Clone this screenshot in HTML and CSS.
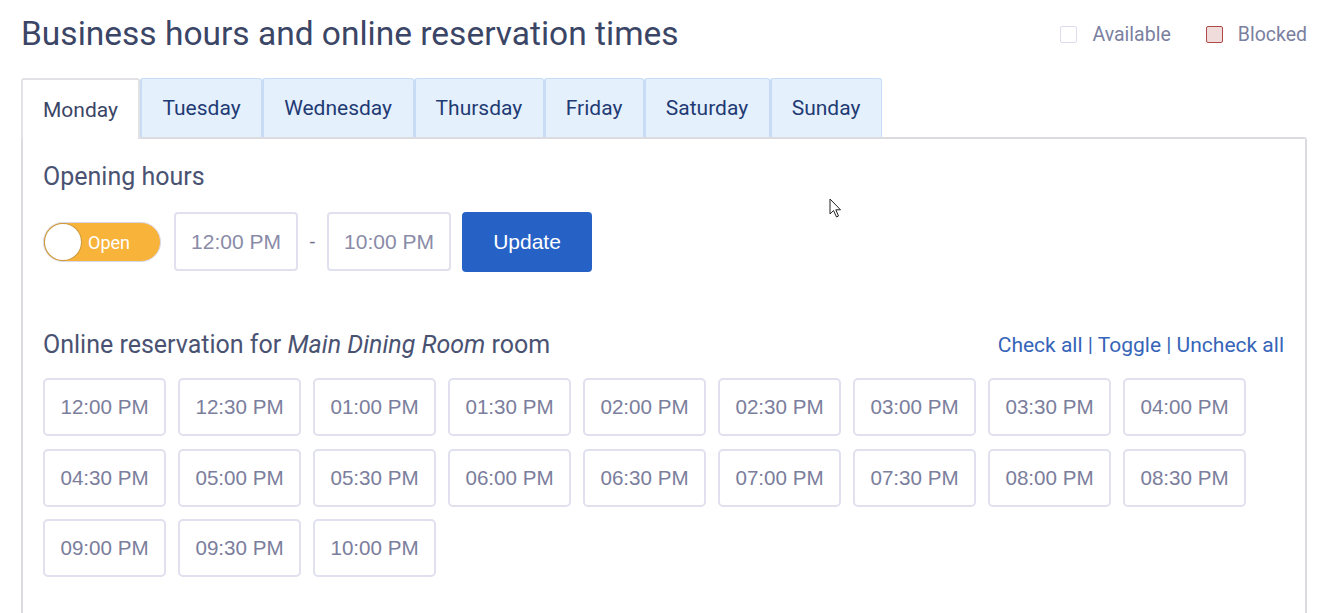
FILE: index.html
```html
<!DOCTYPE html>
<html>
<head>
<meta charset="utf-8">
<link rel="stylesheet" href="styles.css">
</head>
<body>
<div class="page">
  <header class="top">
    <h1 class="title">Business hours and online reservation times</h1>
    <div class="legend">
      <span class="legend-item"><span class="box box-available"></span>Available</span>
      <span class="legend-item"><span class="box box-blocked"></span>Blocked</span>
    </div>
  </header>
  <nav class="tabs">
    <div class="tab active">Monday</div>
    <div class="tab">Tuesday</div>
    <div class="tab">Wednesday</div>
    <div class="tab">Thursday</div>
    <div class="tab">Friday</div>
    <div class="tab">Saturday</div>
    <div class="tab">Sunday</div>
  </nav>
  <section class="panel">
    <h2 class="section-title">Opening hours</h2>
    <div class="hours-row">
      <div class="toggle"><span class="knob"></span><span class="toggle-label">Open</span></div>
      <div class="time-input">12:00 PM</div>
      <span class="dash">-</span>
      <div class="time-input">10:00 PM</div>
      <button class="btn-update">Update</button>
    </div>
    <div class="res-head">
      <h2 class="section-title">Online reservation for <em>Main Dining Room</em> room</h2>
      <div class="links"><a>Check all</a> | <a>Toggle</a> | <a>Uncheck all</a></div>
    </div>
    <div class="slots">
      <div class="slot">12:00 PM</div>
      <div class="slot">12:30 PM</div>
      <div class="slot">01:00 PM</div>
      <div class="slot">01:30 PM</div>
      <div class="slot">02:00 PM</div>
      <div class="slot">02:30 PM</div>
      <div class="slot">03:00 PM</div>
      <div class="slot">03:30 PM</div>
      <div class="slot">04:00 PM</div>
      <div class="slot">04:30 PM</div>
      <div class="slot">05:00 PM</div>
      <div class="slot">05:30 PM</div>
      <div class="slot">06:00 PM</div>
      <div class="slot">06:30 PM</div>
      <div class="slot">07:00 PM</div>
      <div class="slot">07:30 PM</div>
      <div class="slot">08:00 PM</div>
      <div class="slot">08:30 PM</div>
      <div class="slot">09:00 PM</div>
      <div class="slot">09:30 PM</div>
      <div class="slot">10:00 PM</div>
    </div>
  </section>
  <svg class="cursor" width="14" height="22" viewBox="0 0 14 22">
    <path d="M1 1 L1 16 L4.5 12.5 L7.5 19 L9.5 18 L6.8 11.8 L11.5 11.8 Z" fill="#fff" stroke="#222" stroke-width="1"/>
  </svg>
</div>
</body>
</html>
```

FILE: styles.css
```css
html, body {
  margin: 0;
  padding: 0;
  background: #fff;
}
body {
  font-family: Roboto, "Liberation Sans", Arial, sans-serif;
  width: 1330px;
  height: 613px;
  overflow: hidden;
}
.page {
  position: relative;
  height: 613px;
  padding: 0 23px 0 21px;
  display: flex;
  flex-direction: column;
}
.top {
  display: flex;
  justify-content: space-between;
  align-items: center;
  height: 78px;
  flex: none;
}
.title {
  margin: -12px 0 0 0;
  font-size: 33.5px;
  font-weight: 400;
  color: #3b4566;
}
.legend {
  display: flex;
  gap: 35px;
  margin-top: -10px;
  color: #7b7fa0;
  font-size: 19.5px;
}
.legend-item {
  display: flex;
  align-items: center;
}
.box {
  width: 15px;
  height: 15px;
  border-radius: 2px;
  margin-right: 15px;
}
.box-available {
  border: 1px solid #dcdcef;
  background: #fff;
}
.box-blocked {
  border: 1px solid #b04848;
  background: #f1dcdc;
}
.tabs {
  display: flex;
  height: 59px;
  flex: none;
}
.tab {
  display: flex;
  align-items: center;
  padding: 0 20.5px 0 20px;
  font-size: 21px;
  color: #1f3b73;
  background: #e5f0fd;
  border: 1px solid #c8ddf5;
  border-left-width: 2px;
  border-bottom: none;
  border-radius: 3px 3px 0 0;
  box-sizing: border-box;
}
.tab.active {
  background: #fff;
  color: #3b4566;
  border: 2px solid #e2e2e6;
  border-bottom: none;
  margin-bottom: -2px;
  position: relative;
  z-index: 1;
  height: 61px;
}
.panel {
  flex: 1;
  border: 2px solid #dcdce0;
  border-bottom: none;
  border-radius: 0 3px 0 0;
  padding: 24px 21px 0 20px;
}
.section-title {
  margin: 0;
  font-size: 25px;
  font-weight: 400;
  color: #4a5272;
  line-height: 28px;
}
.section-title em {
  font-style: italic;
}
.hours-row {
  display: flex;
  align-items: center;
  margin-top: 21px;
  height: 59px;
}
.toggle {
  position: relative;
  width: 116px;
  height: 38px;
  border-radius: 20px;
  background: #f8b33b;
  border: 1px solid #d8d8ea;
  display: flex;
  align-items: center;
}
.knob {
  position: absolute;
  left: 1px;
  top: 1px;
  width: 36px;
  height: 36px;
  border-radius: 50%;
  background: #fff;
  box-shadow: 0 0 0 1px #c99a3c;
}
.toggle-label {
  margin-left: 44px;
  margin-top: 2px;
  color: #fff;
  font-size: 18px;
}
.time-input {
  width: 124px;
  height: 59px;
  box-sizing: border-box;
  border: 2px solid #e0e0ee;
  border-radius: 4px;
  display: flex;
  align-items: center;
  justify-content: center;
  font-family: "Liberation Sans", Arial, sans-serif;
  font-size: 21px;
  color: #8a8ba8;
}
.toggle + .time-input {
  margin-left: 13px;
}
.dash {
  width: 29px;
  text-align: center;
  font-family: "Liberation Sans", Arial, sans-serif;
  color: #6d6f88;
  font-size: 19px;
}
.btn-update {
  margin-left: 11px;
  width: 130px;
  height: 60px;
  background: #2662c6;
  color: #fff;
  border: none;
  border-radius: 4px;
  font-family: "Liberation Sans", Arial, sans-serif;
  font-size: 21px;
  padding: 0;
}
.res-head {
  display: flex;
  justify-content: space-between;
  align-items: center;
  height: 30px;
  margin-top: 59px;
}
.links {
  font-size: 21px;
  color: #3664b8;
}
.links a {
  color: #3664b8;
}
.slots {
  display: grid;
  grid-template-columns: repeat(9, 123px);
  column-gap: 12px;
  row-gap: 12.5px;
  margin-top: 18px;
}
.slot {
  height: 58px;
  box-sizing: border-box;
  border: 2px solid #e0e0ef;
  border-radius: 5px;
  display: flex;
  align-items: center;
  justify-content: center;
  font-family: "Liberation Sans", Arial, sans-serif;
  font-size: 20.6px;
  color: #7b7e9c;
}
.cursor {
  position: absolute;
  left: 829px;
  top: 198px;
}
```
